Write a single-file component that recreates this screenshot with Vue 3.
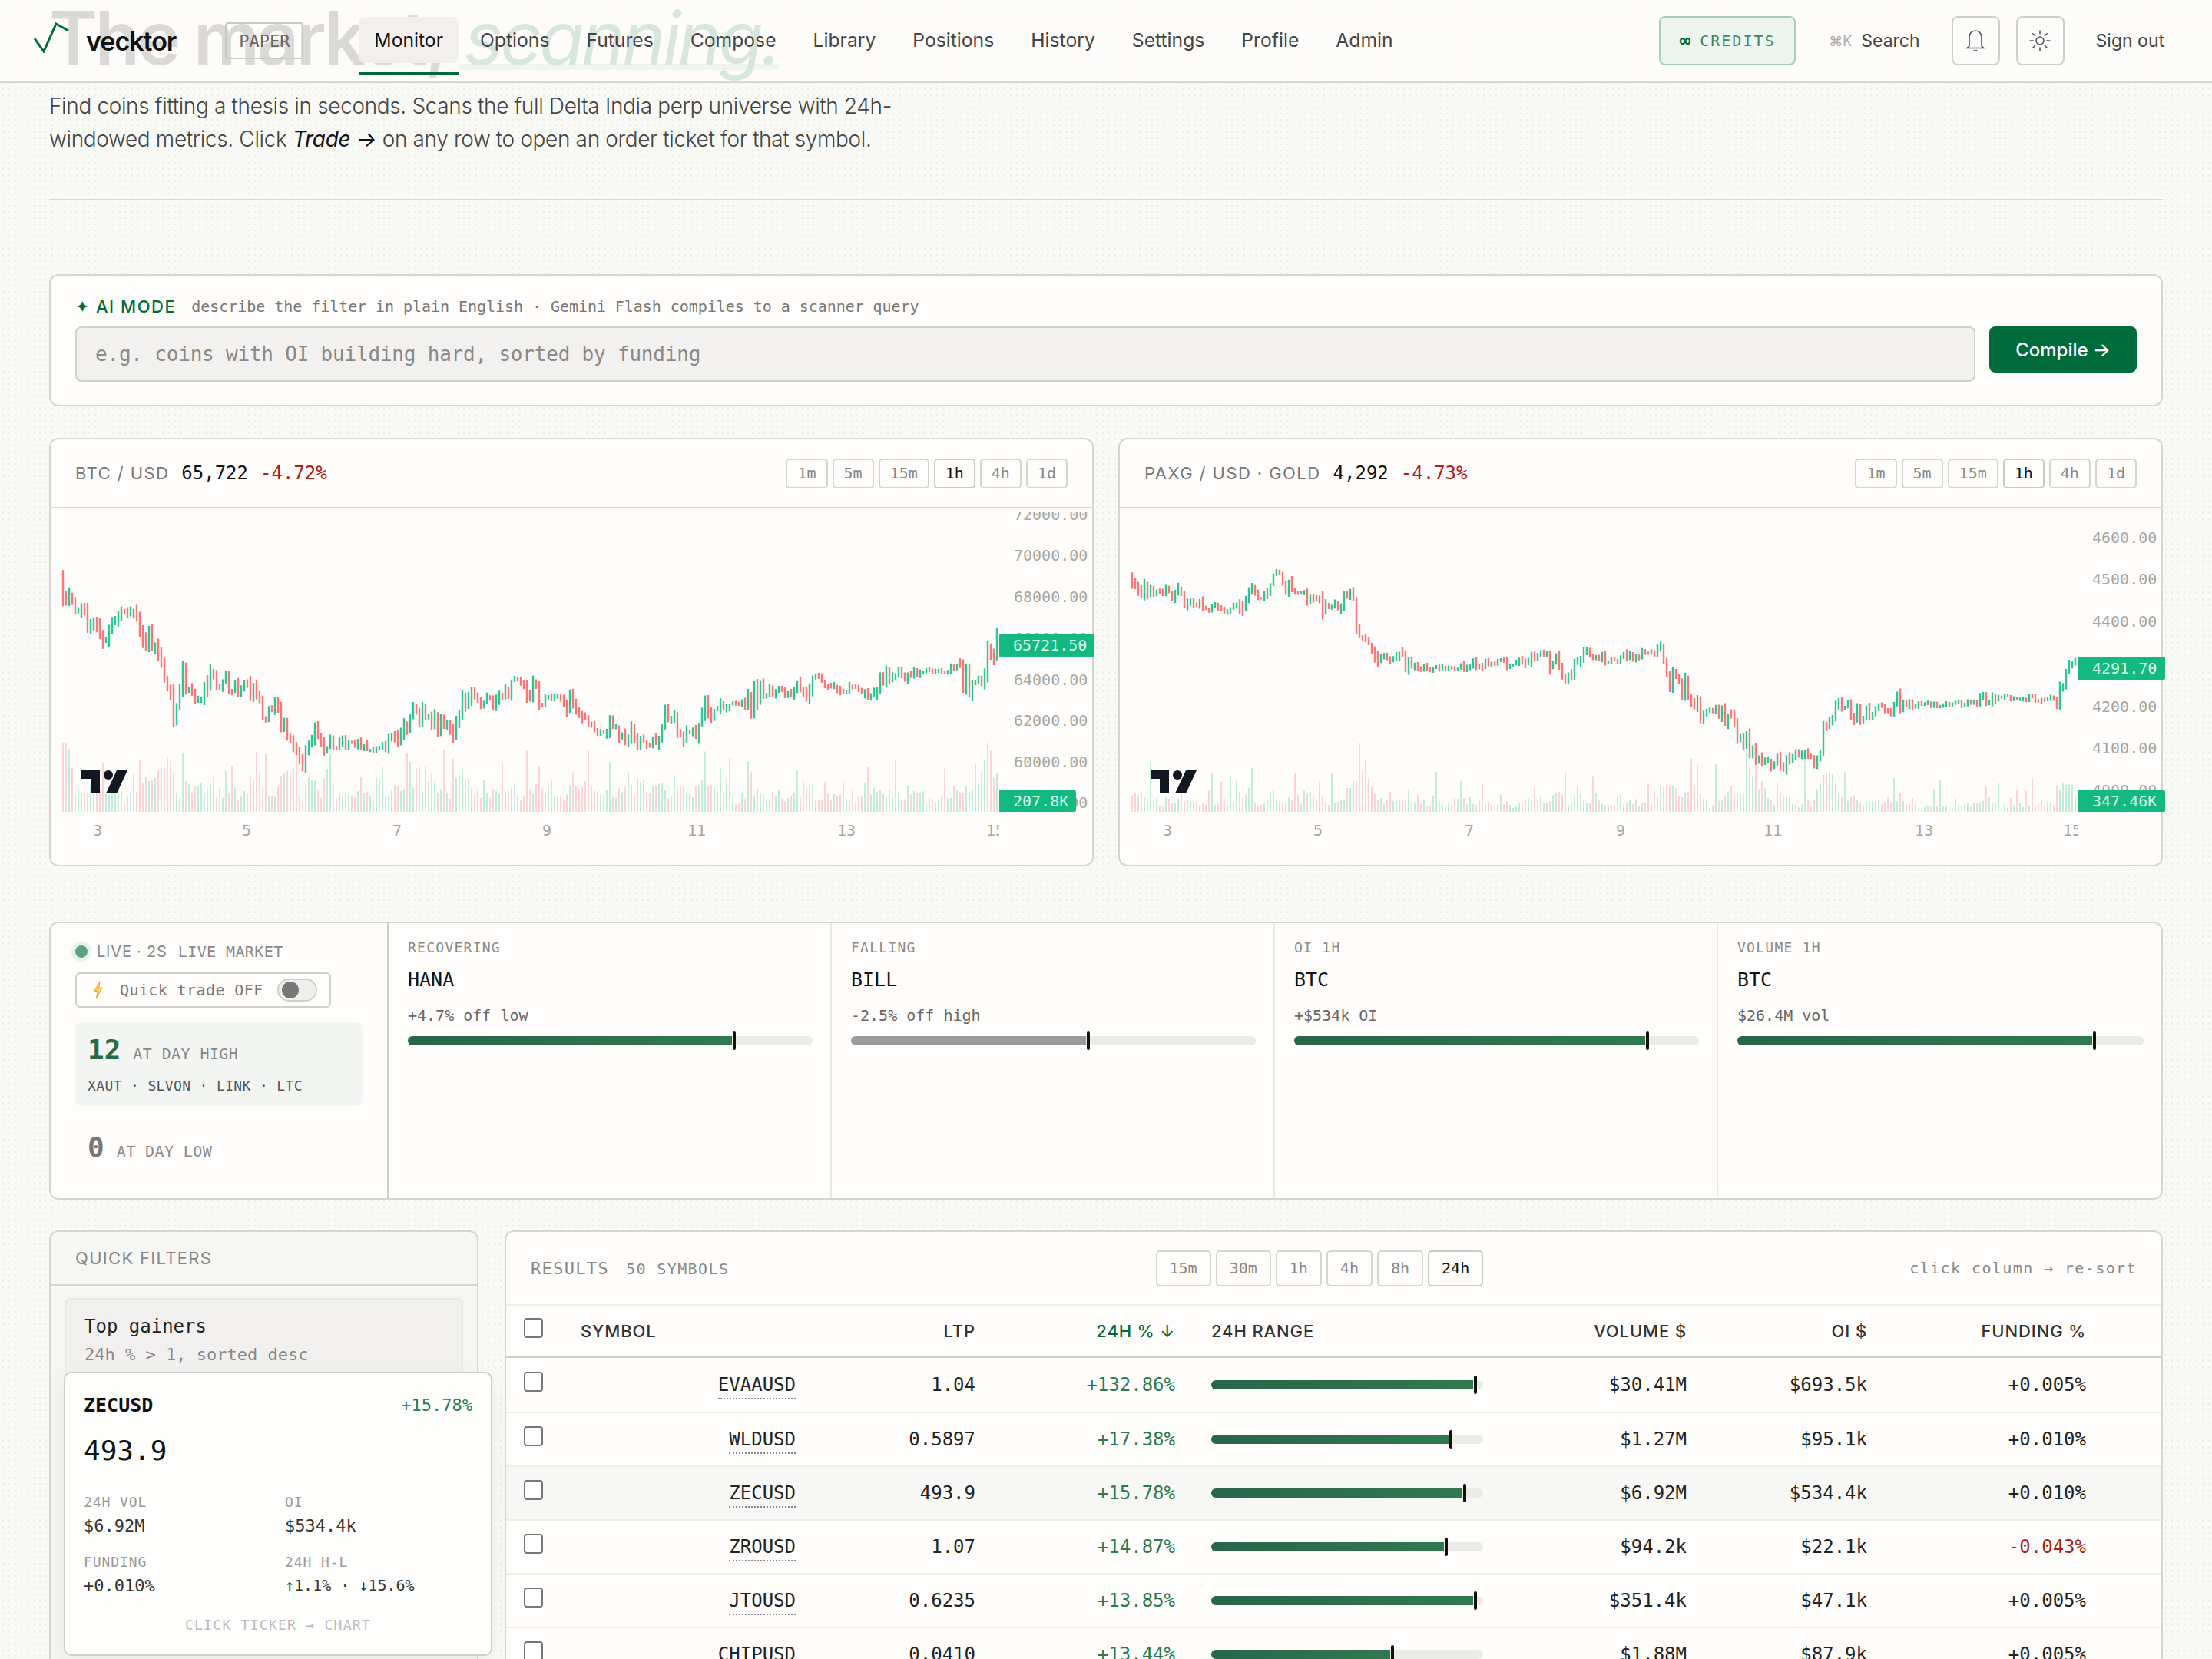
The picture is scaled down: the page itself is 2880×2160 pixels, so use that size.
<template>
  <div class="page">
    <header class="nav">
      <svg class="logo" viewBox="0 0 46 40" width="46" height="40">
        <polyline points="1,21 13,38 29,2 45,11" fill="none" stroke="#006b3a" stroke-width="3" />
      </svg>
      <span class="brand">vecktor</span>
      <span class="paper">PAPER</span>
      <nav class="tabs">
        <a v-for="t in tabs" :key="t" class="tab" :class="{ active: t === 'Monitor' }">{{ t }}</a>
      </nav>
      <div class="nav-right">
        <div class="credits"><b>∞</b><span>CREDITS</span></div>
        <div class="search"><span class="kbd">⌘K</span>Search</div>
        <button class="icon-btn">
          <svg viewBox="0 0 28 30" width="28" height="30" fill="none" stroke="#555" stroke-width="1.6">
            <path d="M6 22V10a8 8 0 0 1 16 0v12l3 2.500H3z" />
            <path d="M12 27a2.200 2.200 0 0 0 4 0" />
          </svg>
        </button>
        <button class="icon-btn">
          <svg viewBox="0 0 30 30" width="30" height="30" fill="none" stroke="#555" stroke-width="1.6" stroke-linecap="round">
            <circle cx="15" cy="15" r="5" />
            <path d="M15 2v4M15 24v4M2 15h4M24 15h4M5.800 5.800l2.800 2.800M21.400 21.400l2.800 2.800M5.800 24.200l2.800-2.800M21.400 8.600l2.800-2.800" />
          </svg>
        </button>
        <a class="signout">Sign out</a>
      </div>
    </header>

    <main class="main">
      <h1 class="title">The market, <em>scanning.</em></h1>
      <p class="lede">
        Find coins fitting a thesis in seconds. Scans the full Delta India perp universe with 24h-windowed metrics.
        Click <i>Trade →</i> on any row to open an order ticket for that symbol.
      </p>
      <hr class="rule" />

      <section class="card ai">
        <div class="ai-head">
          <span class="ai-tag">✦ AI MODE</span>
          <span class="ai-note">describe the filter in plain English · Gemini Flash compiles to a scanner query</span>
        </div>
        <div class="ai-row">
          <div class="ai-input">e.g. coins with OI building hard, sorted by funding</div>
          <button class="compile">Compile →</button>
        </div>
      </section>

      <section class="charts">
        <article v-for="c in charts" :key="c.id" class="card chart">
          <div class="chart-head">
            <span class="pair">{{ c.pair }}</span>
            <span class="last">{{ c.last }}</span>
            <span class="neg">{{ c.change }}</span>
            <div class="tf-group">
              <span v-for="tf in chartFrames" :key="tf" class="tf" :class="{ on: tf === '1h' }">{{ tf }}</span>
            </div>
          </div>
          <div class="chart-body">
            <svg class="plot" :width="c.paneW" height="395">
              <path :d="c.series.volUp" stroke="#c2eddb" stroke-width="2" fill="none" />
              <path :d="c.series.volDown" stroke="#fdd5d5" stroke-width="2" fill="none" />
              <path :d="c.series.up" stroke="#2fc592" stroke-width="2.4" fill="none" />
              <path :d="c.series.down" stroke="#fb7676" stroke-width="2.4" fill="none" />
            </svg>
            <svg class="tv" viewBox="0 0 60 30" width="60" height="30">
              <path d="M0 0H24V30H12V11H0Z" fill="#131722" />
              <circle cx="35" cy="6" r="6" fill="#131722" />
              <path d="M46 0H60L46 30H32Z" fill="#131722" />
            </svg>
            <div class="y-axis" :style="{ left: c.axisX + 'px' }">
              <span v-for="l in c.axis" :key="l.t" :style="{ top: l.y + 'px' }">{{ l.t }}</span>
            </div>
            <div class="x-axis" :style="{ width: c.paneW + 'px' }">
              <span v-for="l in c.times" :key="l.t" :style="{ left: l.x + 'px' }">{{ l.t }}</span>
            </div>
            <div class="price-tag" :style="{ left: c.paneW + 'px', top: c.tagY + 'px', width: c.tagW + 'px' }">{{ c.tag }}</div>
            <div class="price-tag vol" :style="{ left: c.paneW + 'px', width: c.volW + 'px' }">{{ c.volTag }}</div>
          </div>
        </article>
      </section>

      <section class="card market">
        <div class="pulse">
          <div class="live">
            <i class="dot"></i>
            <span class="live-a">LIVE · 2S</span>
            <span class="live-b">LIVE MARKET</span>
          </div>
          <div class="quick">
            <svg viewBox="0 0 18 34" width="18" height="34">
              <path d="M12 1 2 19h6l-3 14L16 13H10z" fill="#fbd46a" stroke="#f2a91f" stroke-width="1.500" />
            </svg>
            <span>Quick trade OFF</span>
            <i class="toggle"><i class="knob"></i></i>
          </div>
          <div class="high-box">
            <div><b class="count up">12</b><span class="count-label">AT DAY HIGH</span></div>
            <div class="coins">XAUT · SLVON · LINK · LTC</div>
          </div>
          <div class="low-row"><b class="count">0</b><span class="count-label">AT DAY LOW</span></div>
        </div>
        <div v-for="m in movers" :key="m.label" class="mover">
          <div class="mover-label">{{ m.label }}</div>
          <div class="mover-sym">{{ m.sym }}</div>
          <div class="mover-note">{{ m.note }}</div>
          <div class="bar mover-bar">
            <i class="fill" :class="{ gray: m.gray }" :style="{ width: m.pct + '%' }"></i>
            <i class="mark" :style="{ left: m.pct + '%' }"></i>
          </div>
        </div>
      </section>

      <section class="lower">
        <aside class="card filters">
          <div class="filters-head">QUICK FILTERS</div>
          <div class="filter-item">
            <div class="filter-name">Top gainers</div>
            <div class="filter-desc">24h % &gt; 1, sorted desc</div>
          </div>
          <div class="filter-item">
            <div class="filter-name">Top losers</div>
            <div class="filter-desc">24h % &lt; -1, sorted asc</div>
          </div>
        </aside>

        <div class="popover">
          <div class="pop-top"><b>ZECUSD</b><span class="pos">+15.78%</span></div>
          <div class="pop-price">493.9</div>
          <div class="pop-grid">
            <div><label>24H VOL</label><span>$6.92M</span></div>
            <div><label>OI</label><span>$534.4k</span></div>
            <div><label>FUNDING</label><span>+0.010%</span></div>
            <div><label>24H H-L</label><span class="hl">↑1.1% · ↓15.6%</span></div>
          </div>
          <div class="pop-foot">CLICK TICKER → CHART</div>
        </div>

        <div class="card results">
          <div class="res-head">
            <div class="res-title"><b>RESULTS</b><span>50 SYMBOLS</span></div>
            <div class="tf-group wide">
              <span v-for="tf in tableFrames" :key="tf" class="tf" :class="{ on: tf === '24h' }">{{ tf }}</span>
            </div>
            <div class="res-hint">click column → re-sort</div>
          </div>
          <div class="row th">
            <span class="check"></span>
            <span class="c-sym-h">SYMBOL</span>
            <span class="num">LTP</span>
            <span class="num sorted">24H % ↓</span>
            <span class="c-range-h">24H RANGE</span>
            <span class="num">VOLUME $</span>
            <span class="num">OI $</span>
            <span class="num">FUNDING %</span>
          </div>
          <div v-for="r in rows" :key="r.sym" class="row td" :class="{ hover: r.sym === 'ZECUSD' }">
            <span class="check"></span>
            <span class="c-sym"><a>{{ r.sym }}</a></span>
            <span class="num">{{ r.ltp }}</span>
            <span class="num pos">{{ r.chg }}</span>
            <span class="c-range">
              <span class="bar">
                <i class="fill" :style="{ width: r.pct + '%' }"></i>
                <i class="mark" :style="{ left: r.pct + '%' }"></i>
              </span>
            </span>
            <span class="num">{{ r.vol }}</span>
            <span class="num">{{ r.oi }}</span>
            <span class="num" :class="{ neg: r.fund.startsWith('-') }">{{ r.fund }}</span>
          </div>
        </div>
      </section>
    </main>
  </div>
</template>

<script setup>
const tabs = ["Monitor", "Options", "Futures", "Compose", "Library", "Positions", "History", "Settings", "Profile", "Admin"];
const chartFrames = ["1m", "5m", "15m", "1h", "4h", "1d"];
const tableFrames = ["15m", "30m", "1h", "4h", "8h", "24h"];

// price outlines read off the reference, in page pixels
const BTC_PATH = [
  [82, 748], [86, 784], [107, 799], [129, 814], [143, 835], [152, 799], [169, 802], [187, 814], [201, 840], [214, 860],
  [228, 917], [232, 937], [241, 881], [263, 911], [281, 886], [308, 896], [326, 896], [348, 937], [361, 917], [379, 968],
  [397, 998], [411, 952], [433, 978], [460, 968], [486, 978], [513, 973], [531, 952], [553, 927], [576, 947], [598, 952],
  [607, 901], [629, 917], [665, 896], [678, 888], [710, 911], [736, 906], [768, 942], [777, 962], [794, 937], [826, 957],
  [848, 968], [870, 932], [902, 957], [924, 922], [955, 914], [978, 917], [986, 899], [1031, 906], [1067, 888], [1120, 899],
  [1156, 883], [1192, 873], [1241, 873], [1277, 896], [1286, 881], [1290, 843], [1301, 837],
];
const GOLD_PATH = [
  [1474, 749], [1494, 767], [1522, 769], [1558, 786], [1608, 795], [1635, 773], [1653, 779], [1666, 753], [1680, 769],
  [1707, 775], [1734, 793], [1748, 782], [1766, 779], [1771, 812], [1789, 853], [1811, 853], [1839, 867], [1884, 872],
  [1911, 869], [1947, 860], [1974, 866], [2012, 849], [2029, 864], [2042, 879], [2065, 853], [2106, 860], [2133, 851],
  [2165, 849], [2174, 886], [2196, 893], [2219, 930], [2237, 923], [2264, 949], [2287, 975], [2305, 1004], [2337, 979],
  [2368, 993], [2382, 941], [2400, 910], [2427, 934], [2445, 916], [2464, 930], [2473, 912], [2491, 917], [2572, 916],
  [2595, 909], [2636, 908], [2685, 912], [2692, 879], [2704, 869],
];

function buildSeries(path, originX, originY, seed, wiggle, volBase) {
  let s = seed;
  const rnd = () => {
    s = (s * 16807) % 2147483647;
    return s / 2147483647;
  };
  const at = (x) => {
    for (let i = 1; i < path.length; i++) {
      if (x <= path[i][0]) {
        const [x0, y0] = path[i - 1];
        const [x1, y1] = path[i];
        return y0 + ((y1 - y0) * (x - x0)) / (x1 - x0);
      }
    }
    return path[path.length - 1][1];
  };
  const out = { up: "", down: "", volUp: "", volDown: "" };
  const paneH = 395;
  let open = at(path[0][0]);
  for (let x = path[0][0]; x < path[path.length - 1][0]; x += 4) {
    const trend = Math.abs(at(x + 12) - at(x - 12));
    const wig = wiggle * (0.28 + Math.min(1, trend / 14));
    const close = at(x + 4) + (rnd() - 0.5) * wig * 3.4;
    const top = Math.min(open, close) - rnd() * wig;
    const bot = Math.max(open, close) + rnd() * wig;
    const isUp = close < open;
    const lx = x - originX;
    const line = `M${lx} ${(top - originY).toFixed(1)}V${(bot - originY + 2).toFixed(1)}`;
    const h = Math.min(90, volBase + rnd() * volBase * 1.4 + Math.pow(rnd(), 6) * 55 + trend * 0.7);
    const vol = `M${lx} ${paneH}V${(paneH - h).toFixed(1)}`;
    if (isUp) {
      out.up += line;
      out.volUp += vol;
    } else {
      out.down += line;
      out.volDown += vol;
    }
    open = close;
  }
  return out;
}

const charts = [
  {
    id: "btc",
    pair: "BTC / USD",
    last: "65,722",
    change: "-4.72%",
    paneW: 1235,
    axisX: 1254,
    tag: "65721.50",
    tagY: 163,
    tagW: 124,
    volTag: "207.8K",
    volW: 100,
    axis: [
      { t: "72000.00", y: 8 }, { t: "70000.00", y: 61 }, { t: "68000.00", y: 115 }, { t: "66000.00", y: 169 },
      { t: "64000.00", y: 223 }, { t: "62000.00", y: 276 }, { t: "60000.00", y: 330 }, { t: "58000.00", y: 383 },
    ],
    times: [61, 255, 451, 646, 841, 1036, 1230].map((x, i) => ({ t: String(3 + i * 2), x })),
    series: buildSeries(BTC_PATH, 66, 663, 48271, 8, 9),
  },
  {
    id: "gold",
    pair: "PAXG / USD · GOLD",
    last: "4,292",
    change: "-4.73%",
    paneW: 1248,
    axisX: 1266,
    tag: "4291.70",
    tagY: 193,
    tagW: 113,
    volTag: "347.46K",
    volW: 113,
    axis: [
      { t: "4600.00", y: 38 }, { t: "4500.00", y: 92 }, { t: "4400.00", y: 147 }, { t: "4300.00", y: 203 },
      { t: "4200.00", y: 258 }, { t: "4100.00", y: 312 }, { t: "4000.00", y: 367 },
    ],
    times: [62, 258, 455, 652, 850, 1047, 1240].map((x, i) => ({ t: String(3 + i * 2), x })),
    series: buildSeries(GOLD_PATH, 1458, 663, 91733, 6, 4),
  },
];

const movers = [
  { label: "RECOVERING", sym: "HANA", note: "+4.7% off low", pct: 80 },
  { label: "FALLING", sym: "BILL", note: "-2.5% off high", pct: 58, gray: true },
  { label: "OI 1H", sym: "BTC", note: "+$534k OI", pct: 86.7 },
  { label: "VOLUME 1H", sym: "BTC", note: "$26.4M vol", pct: 87.4 },
];

const rows = [
  { sym: "EVAAUSD", ltp: "1.04", chg: "+132.86%", pct: 96.3, vol: "$30.41M", oi: "$693.5k", fund: "+0.005%" },
  { sym: "WLDUSD", ltp: "0.5897", chg: "+17.38%", pct: 87.3, vol: "$1.27M", oi: "$95.1k", fund: "+0.010%" },
  { sym: "ZECUSD", ltp: "493.9", chg: "+15.78%", pct: 92.4, vol: "$6.92M", oi: "$534.4k", fund: "+0.010%" },
  { sym: "ZROUSD", ltp: "1.07", chg: "+14.87%", pct: 85.6, vol: "$94.2k", oi: "$22.1k", fund: "-0.043%" },
  { sym: "JTOUSD", ltp: "0.6235", chg: "+13.85%", pct: 96.3, vol: "$351.4k", oi: "$47.1k", fund: "+0.005%" },
  { sym: "CHIPUSD", ltp: "0.0410", chg: "+13.44%", pct: 65.8, vol: "$1.88M", oi: "$87.9k", fund: "+0.005%" },
];
</script>

<style>
html,
body {
  margin: 0;
  background-color: #f9f9f6;
  background-image: radial-gradient(#eceee7 1.2px, transparent 1.6px);
  background-size: 8px 8px;
}
</style>

<style scoped>
* {
  box-sizing: border-box;
}

.page {
  position: relative;
  height: 2160px;
  overflow: hidden;
  font-family: Inter, "Noto Sans", sans-serif;
  color: #111;
}

/* nav sits over the scrolled page, the headline shows through it */
.nav {
  position: relative;
  z-index: 5;
  height: 108px;
  display: flex;
  align-items: center;
  padding: 0 62px 0 44px;
  background: rgba(254, 253, 251, 0.85);
  border-bottom: 2px solid #d9d9d4;
}

.logo {
  margin-top: -8px;
}

.brand {
  margin-left: 22px;
  font-size: 34px;
  font-weight: 600;
  letter-spacing: -0.03em;
  color: #111;
}

.paper {
  margin-left: 64px;
  width: 102px;
  height: 48px;
  display: flex;
  align-items: center;
  justify-content: center;
  border: 2px solid #c9c9c5;
  border-radius: 4px;
  font-family: "DejaVu Sans Mono", monospace;
  font-size: 22px;
  color: #666;
}

.tabs {
  margin-left: 72px;
  display: flex;
  gap: 8px;
  height: 100%;
  padding-top: 22px;
}

.tab {
  position: relative;
  height: 60px;
  padding: 0 20px;
  display: flex;
  align-items: center;
  border-radius: 8px;
  font-size: 24.7px;
  color: #444;
}

.tab.active {
  background: #f1f0ee;
  color: #111;
}

.tab.active::after {
  content: "";
  position: absolute;
  left: 0;
  right: 0;
  top: 72px;
  height: 4px;
  background: #006b3a;
}

.nav-right {
  margin-left: auto;
  display: flex;
  align-items: center;
  gap: 21px;
}

.credits {
  width: 178px;
  height: 64px;
  display: flex;
  align-items: center;
  justify-content: center;
  gap: 12px;
  background: #eef5f0;
  border: 2px solid #a6cfb6;
  border-radius: 8px;
  font-family: "DejaVu Sans Mono", monospace;
  font-size: 20px;
  letter-spacing: 0.1em;
  color: #3a8a5e;
}

.credits b {
  font-size: 24px;
  letter-spacing: 0;
  color: #006b3a;
}

.search {
  padding: 0 20px 0 22px;
  display: flex;
  align-items: center;
  gap: 12px;
  font-size: 23px;
  color: #444;
}

.kbd {
  font-size: 18px;
  color: #aaa;
}

.icon-btn {
  width: 63px;
  height: 64px;
  padding: 0;
  display: flex;
  align-items: center;
  justify-content: center;
  background: transparent;
  border: 2px solid #cfcfca;
  border-radius: 8px;
}

.signout {
  margin-left: 20px;
  font-size: 23px;
  color: #444;
}

.main {
  margin-top: -108px;
  padding: 0 64px;
}

.title {
  margin: 0;
  height: 108px;
  font-size: 96px;
  line-height: 98px;
  font-weight: 600;
  letter-spacing: -0.04em;
  white-space: nowrap;
  color: #111;
}

.title em {
  font-weight: 400;
  color: #006b3a;
  padding: 0 0 0 6px;
  background: linear-gradient(rgba(0, 107, 58, 0.35), rgba(0, 107, 58, 0.35)) no-repeat left 92px / 100% 8px;
}

.lede {
  margin: 9px 0 0;
  max-width: 1120px;
  font-size: 28px;
  line-height: 43px;
  font-weight: 300;
  letter-spacing: -0.36px;
  color: #444;
}

.lede i {
  color: #111;
  font-weight: 400;
}

.rule {
  margin: 56px 0 0;
  border: 0;
  height: 2px;
  background: #d9d9d4;
}

.card {
  background: #fefdfb;
  border: 2px solid #d6d6d1;
  border-radius: 12px;
}

.ai {
  margin-top: 96px;
  height: 172px;
  padding: 26px 32px 0;
}

.ai-head {
  height: 28px;
  display: flex;
  align-items: center;
  gap: 20px;
}

.ai-tag {
  font-size: 22px;
  font-weight: 500;
  letter-spacing: 0.07em;
  color: #006b3a;
}

.ai-note {
  font-family: "DejaVu Sans Mono", monospace;
  font-size: 20px;
  letter-spacing: -0.05px;
  color: #777;
}

.ai-row {
  margin-top: 12px;
  display: flex;
  gap: 18px;
}

.ai-input {
  flex: 1;
  height: 72px;
  padding: 0 24px;
  display: flex;
  align-items: center;
  background: #f2f1ef;
  border: 2px solid #d0d0cb;
  border-radius: 8px;
  font-family: "DejaVu Sans Mono", monospace;
  font-size: 26px;
  letter-spacing: -0.2px;
  color: #8a8a85;
}

.compile {
  width: 192px;
  height: 60px;
  background: #006b3a;
  border: 0;
  border-radius: 8px;
  font-family: Inter, sans-serif;
  font-size: 24px;
  font-weight: 500;
  color: #fff;
}

.charts {
  margin-top: 41px;
  display: grid;
  grid-template-columns: 1360px 1360px;
  justify-content: space-between;
}

.chart {
  height: 558px;
}

.chart-head {
  height: 90px;
  padding: 0 32px;
  display: flex;
  align-items: center;
  gap: 16px;
  border-bottom: 2px solid #d9d9d4;
}

.pair {
  font-size: 22px;
  letter-spacing: 0.065em;
  color: #777;
}

.last,
.neg {
  font-family: "DejaVu Sans Mono", monospace;
  font-size: 24px;
}

.neg {
  color: #b01c1c;
}

.tf-group {
  margin-left: auto;
  display: flex;
  gap: 6px;
}

.tf {
  height: 39px;
  padding: 0 13px;
  display: flex;
  align-items: center;
  background: #fefdfb;
  border: 2px solid #d6d6d1;
  border-radius: 5px;
  font-family: "DejaVu Sans Mono", monospace;
  font-size: 20px;
  color: #888;
}

.tf.on {
  border-color: #cbcbc6;
  color: #111;
}

.chart-body {
  position: relative;
  height: 462px;
}

.plot {
  position: absolute;
  left: 0;
  top: 0;
}

.tv {
  position: absolute;
  left: 40px;
  top: 341px;
}

.y-axis {
  position: absolute;
  top: 4px;
  right: 0;
  bottom: 0;
  overflow: hidden;
  font-family: "DejaVu Sans Mono", monospace;
  font-size: 20px;
  color: #a6a6a2;
}

.y-axis span {
  position: absolute;
  left: 0;
  margin-top: -4px;
  transform: translateY(-50%);
  line-height: 24px;
}

.x-axis {
  position: absolute;
  left: 0;
  top: 395px;
  height: 50px;
  overflow: hidden;
  font-family: "DejaVu Sans Mono", monospace;
  font-size: 20px;
  color: #a6a6a2;
}

.x-axis span {
  position: absolute;
  top: 12px;
  transform: translateX(-50%);
}

.price-tag {
  position: absolute;
  height: 30px;
  padding-left: 18px;
  display: flex;
  align-items: center;
  background: #13b981;
  border-radius: 0 2px 2px 0;
  font-family: "DejaVu Sans Mono", monospace;
  font-size: 20px;
  color: #d8f7ea;
}

.price-tag.vol {
  top: 367px;
  height: 28px;
}

.market {
  margin-top: 72px;
  height: 362px;
  display: grid;
  grid-template-columns: 440px repeat(4, 1fr);
}

.pulse {
  padding: 22px 32px 0;
  border-right: 2px solid #cfcfca;
}

.live {
  height: 30px;
  display: flex;
  align-items: center;
  font-size: 20px;
  color: #888;
}

.dot {
  width: 16px;
  height: 16px;
  margin: 0 12px 0 0;
  border-radius: 50%;
  background: #5aa57f;
  box-shadow: 0 0 0 5px #e8f1ec;
}

.live-a {
  letter-spacing: 0.04em;
}

.live-b {
  margin-left: 14px;
  font-family: "DejaVu Sans Mono", monospace;
  letter-spacing: 0.02em;
}

.quick {
  margin-top: 12px;
  width: 333px;
  height: 46px;
  padding: 0 16px 0 20px;
  display: flex;
  align-items: center;
  border: 2px solid #d0d0cb;
  border-radius: 6px;
  font-family: "DejaVu Sans Mono", monospace;
  font-size: 20px;
  letter-spacing: 0.02em;
  color: #777;
}

.quick svg {
  height: 24px;
  width: 16px;
  margin-right: 20px;
}

.toggle {
  margin-left: auto;
  width: 52px;
  height: 30px;
  padding: 2px 4px;
  background: #f0efeb;
  border: 2px solid #d0d0cb;
  border-radius: 15px;
}

.knob {
  display: block;
  width: 22px;
  height: 22px;
  border-radius: 50%;
  background: #777;
}

.high-box {
  margin-top: 19px;
  width: 374px;
  height: 109px;
  padding: 15px 16px 0;
  background: #f3f5f3;
  border-radius: 8px;
}

.count {
  font-family: "DejaVu Sans Mono", monospace;
  font-size: 36px;
  font-weight: 600;
  color: #777;
}

.count.up {
  color: #2a6b47;
}

.count-label {
  margin-left: 16px;
  font-family: "DejaVu Sans Mono", monospace;
  font-size: 20px;
  letter-spacing: 0.02em;
  color: #888;
}

.coins {
  margin-top: 16px;
  font-family: "DejaVu Sans Mono", monospace;
  font-size: 18px;
  letter-spacing: 0.02em;
  color: #555;
}

.low-row {
  margin-top: 33px;
  padding-left: 16px;
}

.mover {
  padding: 21px 23px 0 25px;
  border-right: 2px solid #e8e8e4;
}

.mover:last-child {
  border-right: 0;
}

.mover-label {
  font-family: "DejaVu Sans Mono", monospace;
  font-size: 18px;
  letter-spacing: 0.07em;
  color: #888;
}

.mover-sym {
  margin-top: 17px;
  font-family: "DejaVu Sans Mono", monospace;
  font-size: 25px;
  font-weight: 500;
  color: #111;
}

.mover-note {
  margin-top: 20px;
  font-family: "DejaVu Sans Mono", monospace;
  font-size: 20px;
  color: #666;
}

.bar {
  position: relative;
  display: block;
  height: 12px;
  background: #ebebe7;
  border-radius: 6px;
}

.mover-bar {
  margin-top: 15px;
}

.fill {
  position: absolute;
  left: 0;
  top: 0;
  bottom: 0;
  border-radius: 6px 0 0 6px;
  background: linear-gradient(90deg, #28664a, #32784f);
}

.fill.gray {
  background: #9a9b9b;
}

.mark {
  position: absolute;
  top: -6px;
  width: 4px;
  height: 24px;
  margin-left: 1px;
  border-radius: 2px;
  background: #111;
}

.lower {
  position: relative;
  margin-top: 40px;
  display: grid;
  grid-template-columns: 559px 1fr;
  gap: 34px;
}

.filters {
  height: 640px;
  background: #f6f6f3;
  padding: 0;
}

.filters-head {
  height: 70px;
  padding: 0 32px;
  display: flex;
  align-items: center;
  border-bottom: 2px solid #d6d6d1;
  font-size: 22px;
  letter-spacing: 0.06em;
  color: #888;
}

.filter-item {
  margin: 16px 18px 0;
  height: 120px;
  padding: 21px 24px;
  background: #f1f0ee;
  border: 2px solid #e6e6e2;
  border-radius: 8px;
  font-family: "DejaVu Sans Mono", monospace;
}

.filter-name {
  font-size: 24px;
  color: #222;
}

.filter-desc {
  margin-top: 10px;
  font-size: 22px;
  color: #888;
}

.popover {
  position: absolute;
  z-index: 3;
  left: 19px;
  top: 184px;
  width: 558px;
  height: 370px;
  padding: 27px 24px 0 24px;
  background: #fefefc;
  border: 2px solid #d0d0cb;
  border-radius: 10px;
  box-shadow: 0 8px 30px rgba(0, 0, 0, 0.06);
  font-family: "DejaVu Sans Mono", monospace;
}

.pop-top {
  display: flex;
  align-items: center;
  justify-content: space-between;
}

.pop-top b {
  font-size: 25px;
  font-weight: 600;
}

.pos {
  color: #2a7a4f;
}

.pop-top .pos {
  font-size: 22px;
}

.pop-price {
  margin-top: 24px;
  font-size: 36px;
  font-weight: 500;
}

.pop-grid {
  margin-top: 36px;
  display: grid;
  grid-template-columns: 262px 1fr;
  row-gap: 24px;
}

.pop-grid label {
  display: block;
  font-size: 18px;
  letter-spacing: 0.05em;
  color: #999;
}

.pop-grid span {
  display: block;
  margin-top: 8px;
  font-size: 22px;
  color: #333;
}

.pop-grid .hl {
  font-size: 20px;
}

.pop-foot {
  margin-top: 28px;
  text-align: center;
  font-size: 18px;
  letter-spacing: 0.07em;
  color: #bbb;
}

.results {
  height: 640px;
  overflow: hidden;
}

.res-head {
  height: 96px;
  padding: 0 32px;
  display: flex;
  align-items: center;
  justify-content: space-between;
  border-bottom: 2px solid #eeeeea;
}

.res-title {
  display: flex;
  align-items: baseline;
  gap: 22px;
  font-family: "DejaVu Sans Mono", monospace;
  color: #888;
}

.res-title b {
  font-size: 22px;
  font-weight: 400;
  letter-spacing: 0.06em;
}

.res-title span {
  font-size: 20px;
  letter-spacing: 0.07em;
}

.tf-group.wide {
  margin-left: 0;
}

.wide .tf {
  height: 47px;
  padding: 0 16px;
}

.res-hint {
  font-family: "DejaVu Sans Mono", monospace;
  font-size: 20px;
  letter-spacing: 0.07em;
  color: #888;
}

.row {
  display: grid;
  grid-template-columns: 75px 326px 232px 260px 403px 263px 235px 285px;
  align-items: center;
}

.th {
  height: 68px;
  border-bottom: 2px solid #cfcfca;
  font-size: 22px;
  font-weight: 500;
  letter-spacing: 0.04em;
  color: #333;
}

.td {
  height: 70px;
  border-bottom: 2px solid #eeeeea;
  font-family: "DejaVu Sans Mono", monospace;
  font-size: 24px;
  color: #222;
}

.td:nth-child(3) {
  height: 72px;
}

.td.hover {
  background: #f7f7f5;
}

.check {
  width: 25px;
  height: 26px;
  margin: -8px 0 0 23px;
  background: #fff;
  border: 2px solid #777;
  border-radius: 4px;
}

.c-sym-h {
  padding-left: 22px;
}

.c-sym {
  padding-right: 24px;
  text-align: right;
}

.c-sym a {
  font-weight: 500;
  padding-bottom: 3px;
  border-bottom: 2px dotted #888;
}

.num {
  padding-right: 22px;
  text-align: right;
}

.sorted {
  color: #006b3a;
}

.c-range-h {
  padding-left: 25px;
}

.c-range {
  padding: 0 24px 0 25px;
}
</style>
